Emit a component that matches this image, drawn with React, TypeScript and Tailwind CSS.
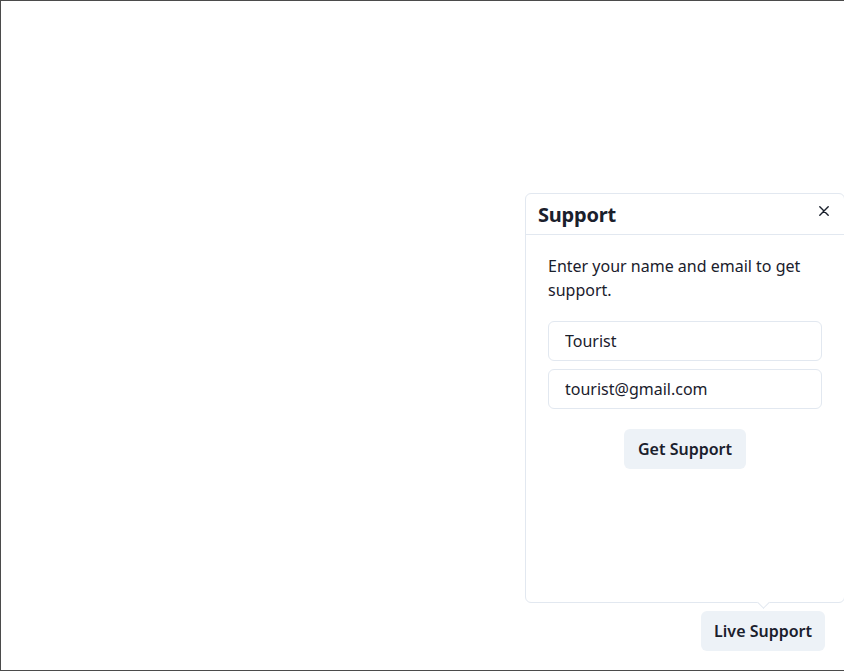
import React from "react";

const font = { fontFamily: '"Noto Sans", "Open Sans", sans-serif' };

const CloseIcon = () => (
  <svg width="10" height="10" viewBox="0 0 10 10" fill="none">
    <path d="M0.8 0.8L9.2 9.2M9.2 0.8L0.8 9.2" stroke="#1a202c" strokeWidth="1.4" strokeLinecap="round" />
  </svg>
);

const App: React.FC = () => {
  return (
    <div className="w-screen h-screen overflow-hidden bg-white" style={font}>
      <div className="relative h-[671px] w-full border-t border-l border-b border-[#4b4b4b] flex flex-col justify-end items-end pr-[19px] pb-[19px]">
        {/* popover */}
        <div className="absolute left-[524px] top-[192px] w-[320px] h-[410px] bg-white border border-[#e2e8f0] rounded-md text-[#1a202c]">
          <div className="relative h-[41px] border-b border-[#e2e8f0] px-3 flex items-center">
            <h2 className="text-[20px] font-bold leading-6 pt-[2px] tracking-[-0.2px]">Support</h2>
            <button className="absolute right-[8px] top-[5px] w-6 h-6 flex items-center justify-center rounded-md">
              <CloseIcon />
            </button>
          </div>
          <div className="pl-[22px] pr-[22px] pt-[19px]">
            <p className="text-base leading-6">Enter your name and email to get support.</p>
            <div className="mt-[19px] flex flex-col gap-2">
              <input
                defaultValue="Tourist"
                className="h-10 w-full rounded-md border border-[#e2e8f0] px-4 text-base text-[#1a202c] outline-none"
                style={font}
              />
              <input
                defaultValue="tourist@gmail.com"
                className="h-10 w-full rounded-md border border-[#e2e8f0] px-4 text-base text-[#1a202c] outline-none"
                style={font}
              />
            </div>
            <div className="mt-5 flex justify-center">
              <button className="h-10 px-[14px] rounded-md bg-[#edf2f7] text-base font-semibold text-[#1a202c]" style={font}>
                Get Support
              </button>
            </div>
          </div>
          <div className="absolute -bottom-[5px] left-[233px] w-[9px] h-[9px] rotate-45 bg-white border-r border-b border-[#e2e8f0]" />
        </div>

        <button className="h-10 px-[13px] rounded-md bg-[#edf2f7] text-base font-semibold text-[#1a202c]" style={font}>
          Live Support
        </button>
      </div>
    </div>
  );
};

export default App;
